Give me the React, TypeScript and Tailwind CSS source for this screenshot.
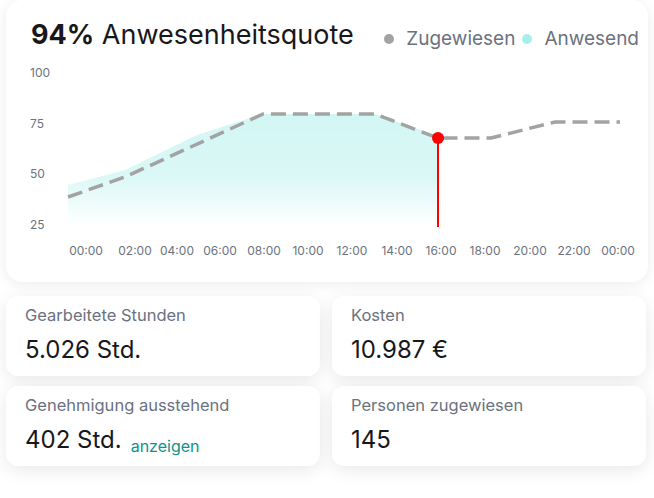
import React from "react";

const xLabels = [
  { x: 80, t: "00:00" },
  { x: 129, t: "02:00" },
  { x: 171, t: "04:00" },
  { x: 214, t: "06:00" },
  { x: 258, t: "08:00" },
  { x: 302, t: "10:00" },
  { x: 346, t: "12:00" },
  { x: 391, t: "14:00" },
  { x: 435, t: "16:00" },
  { x: 479, t: "18:00" },
  { x: 524, t: "20:00" },
  { x: 568, t: "22:00" },
  { x: 612, t: "00:00" },
];

const yLabels = [
  { y: 14, t: "100" },
  { y: 65, t: "75" },
  { y: 115, t: "50" },
  { y: 166, t: "25" },
];

const AttendanceChart: React.FC = () => {
  return (
    <svg width="640" height="222" viewBox="0 0 640 222" className="block">
      <defs>
        <linearGradient id="present" x1="0" y1="54" x2="0" y2="166" gradientUnits="userSpaceOnUse">
          <stop offset="0" stopColor="#d2f6f4" />
          <stop offset="0.55" stopColor="#daf8f6" />
          <stop offset="1" stopColor="#ffffff" />
        </linearGradient>
      </defs>

      {yLabels.map((l) => (
        <text
          key={l.t}
          x="24"
          y={l.y}
          dominantBaseline="middle"
          fontSize="12"
          fill="#6b7280"
          fontFamily="Inter, sans-serif"
        >
          {l.t}
        </text>
      ))}

      <polygon
        points="62,125 119,110 191,75 257,54 369,54 432,76 432,166 62,166"
        fill="url(#present)"
      />

      <polyline
        points="62,137 119,117 257,54 369,54 432,78 485,78 549,62 614,62"
        fill="none"
        stroke="#a3a3a3"
        strokeWidth="3.5"
        strokeDasharray="15 7"
        strokeLinejoin="round"
      />

      <line x1="432" y1="78" x2="432" y2="167" stroke="#ff0000" strokeWidth="2" />
      <circle cx="432" cy="78" r="6" fill="#ff0000" />

      {xLabels.map((l, i) => (
        <text
          key={i}
          x={l.x}
          y="192"
          textAnchor="middle"
          dominantBaseline="middle"
          fontSize="12"
          fill="#6b7280"
          fontFamily="Inter, sans-serif"
        >
          {l.t}
        </text>
      ))}
    </svg>
  );
};

interface StatProps {
  label: string;
  value: string;
  link?: string;
}

const StatCard: React.FC<StatProps> = ({ label, value, link }) => (
  <div className="h-[80px] rounded-xl bg-white px-[19px] pt-[8px] shadow-[0_4px_18px_rgba(0,0,0,0.09)]">
    <p className="text-[16.5px] leading-[22px] text-[#6b7280]">{label}</p>
    <div className="mt-[10px] flex items-baseline gap-[9px]">
      <span className="text-[24px] leading-[28px] text-[#18181b]">{value}</span>
      {link && (
        <span className="relative top-[4px] text-[16px] leading-[20px] text-[#0d9488]">{link}</span>
      )}
    </div>
  </div>
);

export default function App() {
  return (
    <div className="min-h-[498px] w-[654px] bg-white font-['Inter',sans-serif]">
      <div className="mx-[6px] h-[282px] overflow-hidden rounded-2xl bg-white shadow-[0_2px_14px_rgba(0,0,0,0.08)]">
        <div className="flex items-baseline justify-between pl-[25px] pr-[9px] pt-[18px]">
          <h1 className="text-[27px] leading-[34px] text-[#18181b]">
            <span className="font-bold">94%</span> Anwesenheitsquote
          </h1>
          <div className="flex items-center text-[19px] leading-[24px] text-[#6b7280]">
            <span className="mr-[12px] h-[10px] w-[10px] rounded-full bg-[#a3a3a3]" />
            <span>Zugewiesen</span>
            <span className="ml-[7px] mr-[12px] h-[10px] w-[10px] rounded-full bg-[#a7efe8]" />
            <span>Anwesend</span>
          </div>
        </div>
        <div className="mt-[8px]">
          <AttendanceChart />
        </div>
      </div>

      <div className="mt-[14px] grid grid-cols-2 gap-x-[12px] gap-y-[10px] px-[6px] pr-[8px]">
        <StatCard label="Gearbeitete Stunden" value="5.026 Std." />
        <StatCard label="Kosten" value="10.987 €" />
        <StatCard label="Genehmigung ausstehend" value="402 Std." link="anzeigen" />
        <StatCard label="Personen zugewiesen" value="145" />
      </div>
    </div>
  );
}
